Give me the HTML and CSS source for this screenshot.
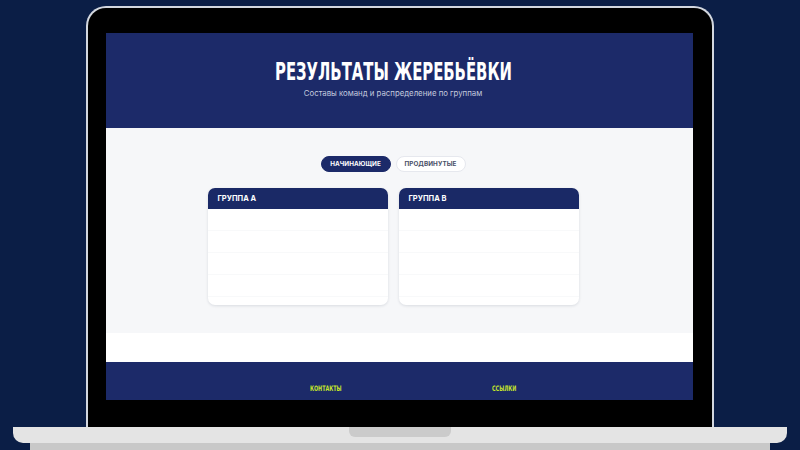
FILE: index.html
```html
<!DOCTYPE html>
<html lang="ru">
<head>
<meta charset="utf-8">
<title>Результаты жеребьёвки</title>
<link rel="stylesheet" href="styles.css">
</head>
<body>
<div class="device">
  <div class="lid">
    <div class="screen">
      <header class="hero">
        <h1 class="hero-title"><span class="narrow">РЕЗУЛЬТАТЫ ЖЕРЕБЬЁВКИ</span></h1>
        <p class="hero-sub">Составы команд и распределение по группам</p>
      </header>
      <main class="draw">
        <div class="tabs">
          <button class="tab tab-active">НАЧИНАЮЩИЕ</button>
          <button class="tab">ПРОДВИНУТЫЕ</button>
        </div>
        <div class="groups">
          <section class="group">
            <h2 class="group-head">ГРУППА А</h2>
            <div class="group-body">
              <div class="row"></div><div class="row"></div><div class="row"></div><div class="row"></div>
            </div>
          </section>
          <section class="group">
            <h2 class="group-head">ГРУППА B</h2>
            <div class="group-body">
              <div class="row"></div><div class="row"></div><div class="row"></div><div class="row"></div>
            </div>
          </section>
        </div>
      </main>
      <div class="spacer"></div>
      <footer class="foot">
        <span class="foot-link"><span class="narrow-sm">КОНТАКТЫ</span></span>
        <span class="foot-link"><span class="narrow-sm">ССЫЛКИ</span></span>
      </footer>
    </div>
  </div>
  <div class="base"><div class="notch"></div></div>
  <div class="base-shadow"></div>
</div>
</body>
</html>
```
FILE: styles.css
```css
html, body {
  margin: 0;
  padding: 0;
}

body {
  width: 800px;
  height: 450px;
  overflow: hidden;
  background: #0b1e46;
  font-family: Inter, Roboto, "Liberation Sans", sans-serif;
}

.device {
  display: flex;
  flex-direction: column;
  align-items: center;
  padding-top: 6px;
}

/* lid: light rim, black bezel */
.lid {
  box-sizing: border-box;
  width: 628px;
  height: 421px;
  border: 2px solid #d3d7df;
  border-bottom: none;
  border-radius: 20px 20px 0 0;
  background: #000;
  padding: 25px 19px 0 18px;
}

.screen {
  height: 367px;
  overflow: hidden;
  display: flex;
  flex-direction: column;
  background: #fff;
}

.hero {
  height: 95px;
  flex: none;
  box-sizing: border-box;
  background: #1c2a69;
  padding: 26px 13px 0 0;
  text-align: center;
}

.hero-title {
  margin: 0;
  font-family: "DejaVu Sans Condensed", sans-serif;
  font-weight: 700;
  font-size: 25px;
  line-height: 26px;
  color: #fff;
}

/* condensed display face */
.narrow {
  display: inline-block;
  transform: scaleX(0.66);
  white-space: nowrap;
}

.hero-sub {
  margin: 3px 0 0;
  font-size: 7.8px;
  line-height: 10px;
  color: #c3c9de;
}

.draw {
  flex: none;
  height: 205px;
  box-sizing: border-box;
  background: #f6f7f9;
  padding: 28px 13px 0 0;
  display: flex;
  flex-direction: column;
  align-items: center;
  gap: 16px;
}

.tabs {
  display: flex;
  gap: 5px;
}

.tab {
  width: 70px;
  height: 16px;
  padding: 0;
  border-radius: 8px;
  border: 1px solid #e6e8ee;
  background: #fff;
  color: #4a5068;
  font-family: inherit;
  font-weight: 700;
  font-size: 6.3px;
  letter-spacing: 0.1px;
}

.tab-active {
  background: #1c2a69;
  border-color: #1c2a69;
  color: #fff;
}

.groups {
  display: flex;
  gap: 11px;
}

.group {
  width: 180px;
  height: 117px;
  border-radius: 7px;
  overflow: hidden;
  background: #fff;
  box-shadow: 0 1px 3px rgba(20, 30, 60, 0.12);
}

.group-head {
  margin: 0;
  height: 21px;
  box-sizing: border-box;
  background: #1a2966;
  color: #fff;
  font-size: 7.5px;
  font-weight: 700;
  line-height: 21px;
  padding-left: 10px;
}

.row {
  height: 21px;
  border-bottom: 1px solid #f8f9fa;
}

.spacer {
  flex: none;
  height: 29px;
  background: #fff;
}

.foot {
  flex: 1;
  background: #1c2a69;
  padding: 22px 0 0 204px;
  display: flex;
  gap: 150px;
}

.foot-link {
  width: 32px;
  font-family: "DejaVu Sans Condensed", sans-serif;
  font-weight: 700;
  font-size: 7.5px;
  color: #c5e52a;
  line-height: 10px;
}

.narrow-sm {
  display: inline-block;
  transform: scaleX(0.72);
  transform-origin: left center;
  white-space: nowrap;
}

/* keyboard deck */
.base {
  width: 774px;
  height: 16px;
  background: #e4e4e4;
  border-radius: 0 0 10px 10px;
  display: flex;
  justify-content: center;
}

.notch {
  width: 102px;
  height: 10px;
  background: #cbcbcb;
  border-radius: 0 0 6px 6px;
}

.base-shadow {
  width: 740px;
  height: 10px;
  background: #c8c8c8;
}
```
